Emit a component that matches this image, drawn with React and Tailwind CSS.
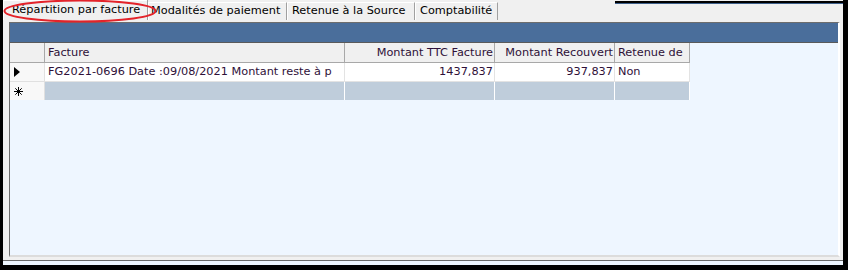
import React from 'react';

const tabs = [
  { label: 'Répartition par facture', w: 'w-[145px] pl-[9px]' },
  { label: 'Modalités de paiement', w: 'w-[139px] pl-[3px]' },
  { label: 'Retenue à la Source', w: 'w-[128px] pl-[5px]' },
  { label: 'Comptabilité', w: 'w-[83px] pl-[5px]' },
];

const cols = [
  { label: 'Facture', w: 'w-[300px]', align: 'text-left pl-[3px]' },
  { label: 'Montant TTC Facture', w: 'w-[150px]', align: 'text-right pr-[1px]' },
  { label: 'Montant Recouvert', w: 'w-[120px]', align: 'text-right pr-[1px]' },
  { label: 'Retenue de', w: 'w-[75px]', align: 'text-left pl-[3px]' },
];

const row = ['FG2021-0696 Date :09/08/2021 Montant reste à p', '1437,837', '937,837', 'Non'];

export default function App() {
  return (
    <div
      className="w-[848px] h-[270px] bg-black overflow-hidden flex flex-col"
      style={{ fontFamily: '"DejaVu Sans", Verdana, sans-serif' }}
    >
      <div className="ml-[3px] mr-[5px] h-[265px] flex flex-col bg-[#eef6ff]">
        {/* tab control */}
        <div className="relative h-[261px] flex flex-col bg-[#f0f0f0] border-b border-[#6a6a6a]">
          <div className="h-[20px] flex items-end text-[11.3px] text-black">
            {tabs.map((t, i) => (
              <div
                key={t.label}
                className={`${t.w} flex items-center whitespace-nowrap overflow-hidden border-r border-[#a0a0a0] ${
                  i === 0
                    ? 'h-[20px] bg-[#f0f0f0] shadow-[inset_1px_1px_0_#ffffff]'
                    : 'h-[18px] border-t border-t-white shadow-[inset_1px_0_0_#ffffff]'
                }`}
              >
                {t.label}
              </div>
            ))}
            <div className="flex-1 self-start flex justify-end">
              <div className="w-[228px] h-[3px] border-t-2 border-black border-b border-b-[#3e5f8a] mt-[1px]" />
            </div>
          </div>

          {/* grid */}
          <div className="flex-1 ml-[6px] mr-[3px] mt-[2px] mb-[3px] flex flex-col bg-[#eef6ff] border-l border-t border-[#6d6d6d] border-r-2 border-r-white border-b-2 border-b-[#dcdcdc]">
            <div className="h-[20px] bg-[#4a6e9b] border-b border-[#5a5a5a]" />
            <div className="flex text-[11.3px] text-[#2e1038]">
              <div className="w-[35px] h-[20px] bg-[#f0f0f0] border-r border-b border-[#a8a8a8]" />
              {cols.map((c) => (
                <div
                  key={c.label}
                  className={`${c.w} h-[20px] leading-[19px] bg-[#f0f0f0] border-r border-b border-[#a8a8a8] whitespace-nowrap overflow-hidden ${c.align}`}
                >
                  {c.label}
                </div>
              ))}
            </div>
            <div className="flex text-[11.3px] text-[#2e1038]">
              <div className="w-[35px] h-[19px] bg-[#f8f8f8] border-r border-b border-[#e0e0e0] flex items-center pl-[4px]">
                <svg width="6" height="10" viewBox="0 0 6 10">
                  <path d="M0 0 L6 5 L0 10 Z" fill="#000" />
                </svg>
              </div>
              {cols.map((c, i) => (
                <div
                  key={c.label}
                  className={`${c.w} h-[19px] leading-[18px] bg-white border-r border-b border-[#e3e3e3] whitespace-nowrap overflow-hidden ${c.align}`}
                >
                  {row[i]}
                </div>
              ))}
            </div>
            <div className="flex">
              <div className="w-[35px] h-[18px] bg-[#f8f8f8] border-r border-[#e0e0e0] flex items-center pl-[4px]">
                <svg width="9" height="9" viewBox="0 0 9 9" stroke="#000" strokeWidth="1">
                  <path d="M4.5 0 V9 M0 4.5 H9 M1.3 1.3 L7.7 7.7 M7.7 1.3 L1.3 7.7" />
                </svg>
              </div>
              {cols.map((c) => (
                <div key={c.label} className={`${c.w} h-[18px] bg-[#bfcddb] border-r border-white`} />
              ))}
            </div>
          </div>

          <svg className="absolute left-0 top-0 pointer-events-none" width="160" height="24">
            <ellipse cx="77" cy="11" rx="75.5" ry="10.5" fill="none" stroke="#e3232a" strokeWidth="2" />
          </svg>
        </div>
      </div>
    </div>
  );
}
